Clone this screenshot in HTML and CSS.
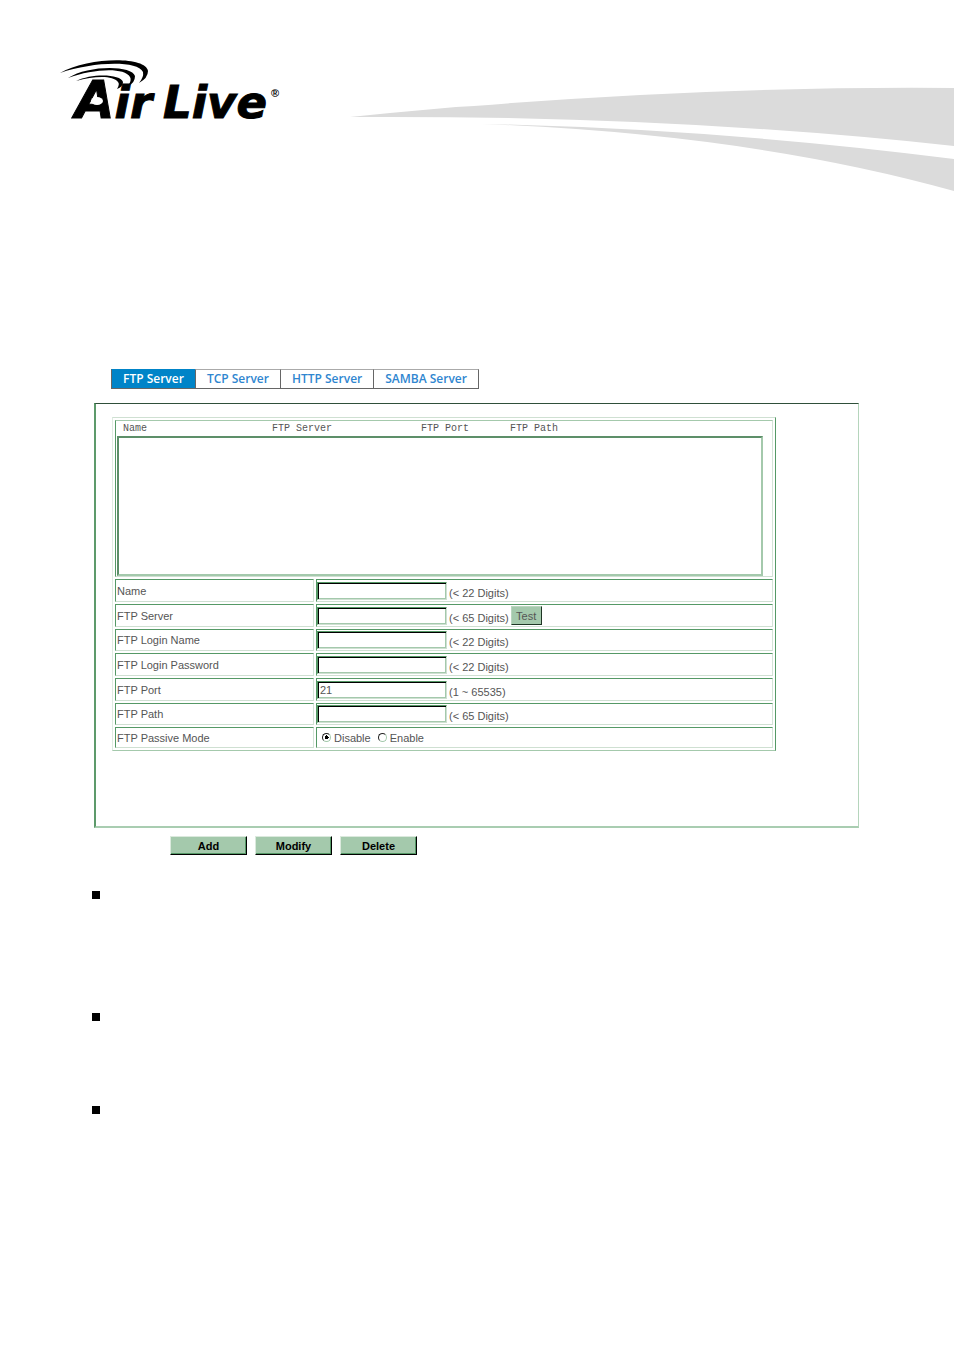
FILE: index.html
```html
<!DOCTYPE html>
<html lang="en">
<head>
<meta charset="utf-8">
<title>AirLive - FTP Server</title>
<link rel="stylesheet" href="styles.css">
</head>
<body>
<header class="masthead">
  <svg class="logo" viewBox="0 0 240 90" role="img" aria-label="Air Live">
    <path d="M0 16C28 0 86-1 88 14Q88 21 79 26Q84 20 83 15C77 3 32 5 0 16Z"/>
    <path d="M8 21C28 8 72 8 75 19Q75 26 68 29Q72 23 70 20C64 10 33 12 8 21Z"/>
    <path d="M16 24C32 16 61 17 63 25Q63 30 57 32Q60 27 58 25C53 18 34 19 16 24Z"/>
    <text class="logo-text" x="15" y="61"><tspan class="logo-big">A</tspan>ir</text>
    <text class="logo-text" x="103" y="61">Live</text>
    <ellipse class="logo-eye" cx="37" cy="44" rx="6" ry="4"/>
    <text class="logo-mark" x="211" y="40">®</text>
  </svg>
  <svg class="swoosh" viewBox="0 0 604 108" aria-hidden="true">
    <path d="M0 30L40 26L106 20L124 19Q370-1 604 1V59Q320 28 0 30Z"/>
    <path d="M132 37Q370 42 604 72V104Q400 47 132 37Z"/>
  </svg>
</header>

<main class="page">
  <nav class="tabs">
    <a class="tab active" href="#ftp">FTP Server</a>
    <a class="tab" href="#tcp">TCP Server</a>
    <a class="tab" href="#http">HTTP Server</a>
    <a class="tab" href="#samba">SAMBA Server</a>
  </nav>

  <form id="ftp">
    <div class="panel">
      <table class="settings">
        <colgroup><col class="col-label"><col></colgroup>
        <tbody>
        <tr class="list-row">
          <td colspan="2">
            <div class="list-head"><span>Name</span><span>FTP Server</span><span>FTP Port</span><span>FTP Path</span></div>
            <select class="server-list" size="8" aria-label="FTP servers"></select>
          </td>
        </tr>
        <tr><td><label for="name">Name</label></td><td><div class="field"><input class="box" id="name" type="text"><span>(&lt; 22 Digits)</span></div></td></tr>
        <tr><td><label for="server">FTP Server</label></td><td><div class="field"><input class="box" id="server" type="text"><span>(&lt; 65 Digits)</span><button class="test" type="button">Test</button></div></td></tr>
        <tr><td><label for="login">FTP Login Name</label></td><td><div class="field"><input class="box" id="login" type="text"><span>(&lt; 22 Digits)</span></div></td></tr>
        <tr><td><label for="password">FTP Login Password</label></td><td><div class="field"><input class="box" id="password" type="password"><span>(&lt; 22 Digits)</span></div></td></tr>
        <tr><td><label for="port">FTP Port</label></td><td><div class="field"><input class="box" id="port" type="text" value="21"><span>(1 ~ 65535)</span></div></td></tr>
        <tr><td><label for="path">FTP Path</label></td><td><div class="field"><input class="box" id="path" type="text"><span>(&lt; 65 Digits)</span></div></td></tr>
        <tr class="mode-row"><td>FTP Passive Mode</td><td><div class="modes">
          <label class="mode"><input class="radio" type="radio" name="passive" checked>Disable</label>
          <label class="mode"><input class="radio" type="radio" name="passive">Enable</label>
        </div></td></tr>
        </tbody>
      </table>
    </div>
    <div class="actions">
      <button class="action" type="button">Add</button>
      <button class="action" type="button">Modify</button>
      <button class="action" type="button">Delete</button>
    </div>
  </form>

  <ul class="notes">
    <li class="note note-long"></li>
    <li class="note"></li>
    <li class="note"></li>
  </ul>
</main>
</body>
</html>
```
FILE: styles.css
```css
* { box-sizing: border-box; }

body {
  margin: 0;
  background: #fff;
  color: #555;
  font-family: "Liberation Sans", Arial, sans-serif;
  font-size: 11px;
  line-height: 14px;
}

button, input, select { font: inherit; color: inherit; margin: 0; }

.masthead {
  display: flex;
  align-items: flex-start;
  justify-content: space-between;
  padding: 57px 0 0 60px;
}
.logo { width: 240px; height: 90px; margin-right: 50px; flex: none; overflow: visible; }
.logo-text {
  font-family: "DejaVu Sans", sans-serif;
  font-size: 45px;
  font-weight: bold;
  font-style: italic;
  stroke: #000;
  stroke-width: 1;
}
.logo-big { font-size: 51px; }
.logo-eye { fill: #fff; }
.logo-mark { font-size: 11px; font-weight: bold; }
.swoosh { flex: 1; min-width: 0; margin-top: 30px; fill: #dbdbdb; }

.page { padding: 174px 95px 0 94px; }

.tabs { display: flex; margin-left: 17px; }
.tab {
  padding: 0 11px;
  border: 1px solid #666;
  border-top-color: #aaa;
  margin-right: -1px;
  color: #2f86d0;
  font-family: "Open Sans", sans-serif;
  font-size: 12px;
  font-weight: 600;
  line-height: 18px;
  text-decoration: none;
}
.tab.active { background: #0084c8; border-color: #0084c8 #666 #666; color: #fff; }

.panel {
  min-height: 425px;
  margin-top: 14px;
  padding: 13px 82px 13px 16px;
  border: solid;
  border-width: 1px 1px 2px 2px;
  border-color: #2f4f3a #b5d5bc #a9cdb1 #5d9a6b;
}

.settings {
  width: 100%;
  table-layout: fixed;
  border-collapse: separate;
  border-spacing: 2px;
  border: 1px solid;
  border-color: #cfe0d2 #559966 #a4c9ac #dfece1;
}
.col-label { width: 199px; }
.settings td {
  height: 23px;
  padding: 0 1px;
  border: 1px solid;
  border-color: #559966 #d5e4d8 #cfe0d2 #559966;
  vertical-align: middle;
}
.settings td + td { padding: 0; }
.settings tr:nth-child(3n + 1) td { height: 22px; }
.settings .mode-row td { height: 21px; }
.settings .list-row td { height: 157px; border-top-color: #a4c9ac; vertical-align: top; }

.list-head {
  display: grid;
  grid-template-columns: 149px 149px 89px 1fr;
  padding: 1px 0 0 6px;
  font-family: "Liberation Mono", "Courier New", monospace;
  font-size: 10px;
}
.server-list {
  display: block;
  width: calc(100% - 8px);
  height: 140px;
  border: 2px solid;
  border-color: #5d8f69 #a4c9ac #a4c9ac #5d8f69;
  border-radius: 0;
  background: #fff;
  outline: 0;
}

.field { display: flex; align-items: center; gap: 2px; height: 20px; }
.field span { padding-top: 4px; }
.box {
  width: 130px;
  height: 18px;
  padding: 0 2px;
  border: 1px solid;
  border-color: #559966 #cfe0d2 #cfe0d2 #559966;
  box-shadow: inset 1px 1px #000, inset -1px -1px #a4c9ac;
  background: #fff;
}
.test {
  width: 31px;
  height: 19px;
  padding: 0;
  border: 1px solid;
  border-color: #b9d5be #1e3524 #1e3524 #b9d5be;
  background: #a4c9ac;
}

.modes { display: flex; gap: 7px; padding-left: 5px; }
.mode { display: flex; align-items: center; gap: 3px; }
.radio {
  appearance: none;
  width: 9px;
  height: 9px;
  border: 1px solid;
  border-color: #222 #a4c9ac #a4c9ac #222;
  border-radius: 50%;
}
.radio:checked { background: radial-gradient(#000 0 2px, #fff 2px); }

.actions { display: flex; gap: 8px; padding: 8px 0 0 76px; }
.action {
  width: 77px;
  height: 19px;
  padding: 0;
  border: 1px solid;
  border-color: #dbe9dd #000 #000 #dbe9dd;
  box-shadow: inset -1px -1px #559966;
  background: #a4c9ac;
  color: #000;
  font-weight: bold;
}

.notes { margin: 36px 0 0; padding: 0; list-style: none; }
.note { height: 93px; margin-left: -2px; }
.note-long { height: 122px; }
.note::before { content: ""; display: block; width: 8px; height: 8px; background: #000; }
```
